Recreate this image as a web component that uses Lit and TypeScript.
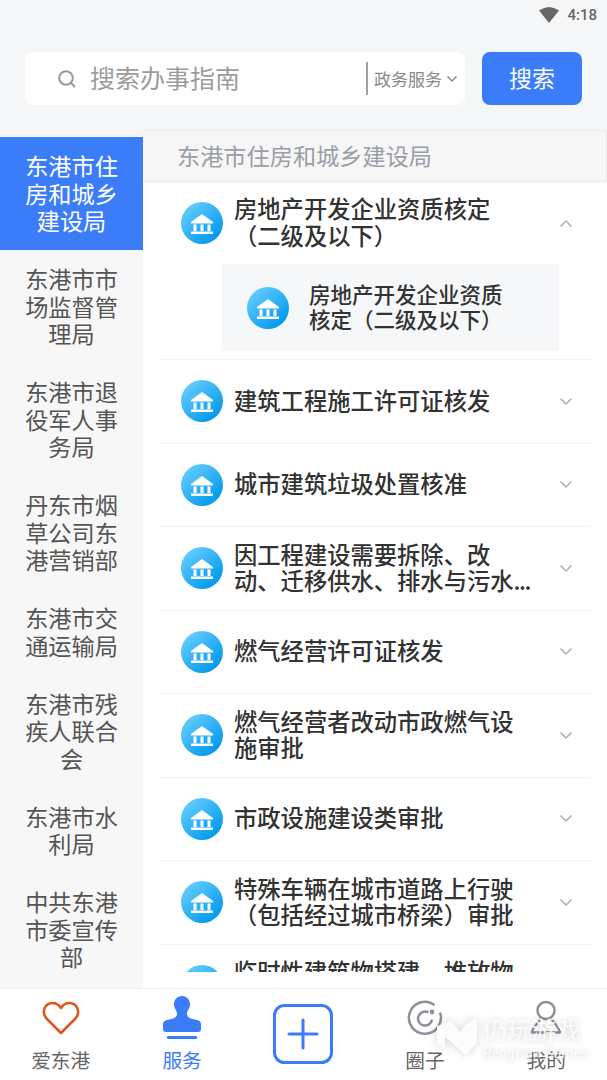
import { LitElement, html, css, svg } from 'lit';
import { customElement } from 'lit/decorators.js';

const departments = [
  '东港市住房和城乡建设局',
  '东港市市场监督管理局',
  '东港市退役军人事务局',
  '丹东市烟草公司东港营销部',
  '东港市交通运输局',
  '东港市残疾人联合会',
  '东港市水利局',
  '中共东港市委宣传部',
];

// line breaks are fixed, the app breaks these titles differently than css would
const services = [
  '建筑工程施工许可证核发',
  '城市建筑垃圾处置核准',
  '因工程建设需要拆除、改\n动、迁移供水、排水与污水...',
  '燃气经营许可证核发',
  '燃气经营者改动市政燃气设\n施审批',
  '市政设施建设类审批',
  '特殊车辆在城市道路上行驶\n（包括经过城市桥梁）审批',
  '临时性建筑物搭建、堆放物\n料审批',
];

const bankIcon = (id: string) => html`
  <svg class="bank" width="42" height="42" viewBox="0 0 42 42">
    <defs>
      <linearGradient id=${id} x1="0.15" y1="0.1" x2="0.85" y2="0.9">
        <stop offset="0" stop-color="#62ccff" />
        <stop offset="1" stop-color="#0098ec" />
      </linearGradient>
    </defs>
    <circle cx="21" cy="21" r="21" fill="url(#${id})" />
    <path d="M21 12 L32 20 V21.500 H10 V20 Z" fill="#fff" />
    <path d="M12.500 22.500h3v6.500h-3z M19.500 22.500h3v6.500h-3z M26.500 22.500h3v6.500h-3z" fill="#fff" />
    <rect x="10" y="29.500" width="22" height="2.500" fill="#fff" />
  </svg>
`;

const chevron = (up = false) => svg`
  <svg class="chev" width="14" height="9" viewBox="0 0 14 9">
    <path d=${up ? 'M1.500 7.500 L7 2 L12.500 7.500' : 'M1.500 1.500 L7 7 L12.500 1.500'} fill="none" stroke="#a9adb8" stroke-width="1.500" />
  </svg>
`;

// the trailing dots sit tighter than the font's own
const titleText = (s: string) =>
  s.endsWith('...') ? html`${s.slice(0, -3)}<span class="dots">...</span>` : s;

@customElement('app-root')
export class AppRoot extends LitElement {
  static styles = css`
    :host {
      display: flex;
      flex-direction: column;
      position: relative;
      width: 607px;
      height: 1080px;
      overflow: hidden;
      background: #f5f6f8;
      font-family: 'Noto Sans CJK SC', 'Noto Sans', sans-serif;
    }
    .status {
      height: 30px;
      display: flex;
      justify-content: flex-end;
      align-items: center;
      gap: 8px;
      padding-right: 10px;
      font: 500 15px Roboto, sans-serif;
      color: #666;
    }
    .search-row {
      display: flex;
      gap: 17px;
      padding: 22px 25px 25px;
    }
    .search {
      width: 440px;
      height: 53px;
      border-radius: 8px;
      background: #fff;
      display: flex;
      align-items: center;
      padding-left: 32px;
      box-sizing: border-box;
    }
    .placeholder {
      margin-left: 13px;
      width: 276px;
      padding-bottom: 4px;
      font-size: 25px;
      color: #9c9c9c;
    }
    .scope {
      height: 33px;
      border-left: 2px solid #a0a0a0;
      padding-left: 6px;
      display: flex;
      align-items: center;
      gap: 4px;
      font-size: 17px;
      color: #8a8a8a;
    }
    .go {
      width: 100px;
      height: 53px;
      box-sizing: border-box;
      padding-bottom: 4px;
      border-radius: 8px;
      background: #3b7cf8;
      color: #fff;
      font-size: 23px;
      display: flex;
      align-items: center;
      justify-content: center;
    }
    .body {
      flex: 1;
      min-height: 0;
      display: flex;
      align-items: stretch;
    }
    .side {
      width: 143px;
      margin-top: 7px;
      background: #f7f7f7;
      overflow: hidden;
    }
    .dept {
      padding: 15px 24px 15.500px;
      font-size: 23.200px;
      line-height: 27.500px;
      text-align: center;
      color: #555;
    }
    .dept.on {
      background: #3b7cf8;
      color: #fff;
    }
    .main {
      flex: 1;
      min-width: 0;
      background: #fff;
      display: flex;
      flex-direction: column;
    }
    .head {
      height: 52px;
      flex: none;
      box-sizing: border-box;
      border-top: 1px solid #ececec;
      border-right: 1px solid #ececec;
      border-bottom: 1px solid #ececec;
      background: #f6f6f7;
      padding: 0 0 3px 34px;
      display: flex;
      align-items: center;
      font-size: 23.200px;
      color: #9a9ea6;
    }
    .list {
      height: 790px;
      overflow: hidden;
      padding: 0 16px 0 17px;
    }
    .item {
      border-bottom: 1px solid #f1f1f1;
    }
    .row {
      height: 82.500px;
      display: flex;
      align-items: center;
      padding-left: 21px;
    }
    .row.open {
      height: 82px;
    }
    .title {
      flex: 1;
      min-width: 0;
      margin-left: 11px;
      padding-bottom: 2px;
      font-size: 23.300px;
      font-weight: 500;
      line-height: 26.700px;
      color: #333;
      white-space: pre;
    }
    .dots {
      letter-spacing: -1.500px;
    }
    .chev {
      flex: none;
      margin: 0 18px 0 24px;
    }
    .sub {
      margin: 0 32px 8px 62px;
      height: 87px;
      background: #f6f7f8;
      display: flex;
      align-items: center;
      padding-left: 25px;
    }
    .sub-title {
      margin-left: 20px;
      width: 200px;
      padding-bottom: 3px;
      font-size: 21.500px;
      font-weight: 500;
      line-height: 25px;
      color: #333;
    }
    .nav {
      height: 92px;
      flex: none;
      background: #fff;
      border-top: 1px solid #f0f0f0;
      box-sizing: border-box;
      display: grid;
      grid-template-columns: repeat(5, 1fr);
    }
    .tab {
      display: flex;
      flex-direction: column;
      align-items: center;
      font-size: 19.700px;
      color: #666;
    }
    .tab.on {
      color: #3b7cf8;
    }
    .icon {
      height: 57px;
      display: flex;
      align-items: center;
      justify-content: center;
    }
    .tab span {
      line-height: 28px;
    }
    .plus {
      padding-top: 15px;
    }
    .mark {
      position: absolute;
      left: 437px;
      top: 1014px;
      display: flex;
      gap: 6px;
      align-items: flex-start;
      color: rgba(255, 255, 255, 0.9);
      pointer-events: none;
    }
    .mark svg {
      margin-top: 3px;
      filter: drop-shadow(0 0 4px rgba(0, 0, 0, 0.2));
    }
    .mark b {
      display: block;
      font-size: 24.300px;
      font-weight: 400;
      line-height: 30px;
      text-shadow: 0 0 6px rgba(0, 0, 0, 0.2);
    }
    .mark i {
      display: block;
      margin-top: 1px;
      font: 400 14px/16px Roboto, sans-serif;
      text-shadow: 0 0 5px rgba(0, 0, 0, 0.2);
    }
  `;

  render() {
    return html`
      <div class="status">
        <svg width="20" height="16" viewBox="0 0 20 16"><path d="M0 3.500 Q10 -3.500 20 3.500 L10 16 Z" fill="#666" /></svg>
        4:18
      </div>
      <div class="search-row">
        <div class="search">
          <svg width="20" height="20" viewBox="0 0 20 20">
            <circle cx="9" cy="9" r="6.800" fill="none" stroke="#999" stroke-width="2" />
            <path d="M14 14 L18 18" stroke="#999" stroke-width="2" />
          </svg>
          <div class="placeholder">搜索办事指南</div>
          <div class="scope">
            政务服务
            <svg width="12" height="8" viewBox="0 0 12 8"><path d="M1.500 1.500 L6 6 L10.500 1.500" fill="none" stroke="#8a8a8a" stroke-width="1.500" /></svg>
          </div>
        </div>
        <div class="go">搜索</div>
      </div>
      <div class="body">
        <div class="side">
          ${departments.map((d, i) => html`<div class="dept ${i === 0 ? 'on' : ''}">${d}</div>`)}
        </div>
        <div class="main">
          <div class="head">东港市住房和城乡建设局</div>
          <div class="list">
            <div class="item">
              <div class="row open">
                ${bankIcon('g0')}
                <div class="title">${'房地产开发企业资质核定\n（二级及以下）'}</div>
                ${chevron(true)}
              </div>
              <div class="sub">
                ${bankIcon('s0')}
                <div class="sub-title">房地产开发企业资质核定（二级及以下）</div>
              </div>
            </div>
            ${services.map(
              (s, i) => html`
                <div class="item">
                  <div class="row">
                    ${bankIcon(`g${i + 1}`)}
                    <div class="title">${titleText(s)}</div>
                    ${chevron()}
                  </div>
                </div>
              `
            )}
          </div>
        </div>
      </div>
      <div class="nav">
        <div class="tab">
          <div class="icon">
            <svg width="38" height="34" viewBox="0 0 38 34">
              <path d="M19 32 L4.500 17.500 C-1 11 3 2 10.500 2 C14 2 17 4 19 7 C21 4 24 2 27.500 2 C35 2 39 11 33.500 17.500 Z" fill="none" stroke="#e0531c" stroke-width="2.500" stroke-linejoin="round" />
            </svg>
          </div>
          <span>爱东港</span>
        </div>
        <div class="tab on">
          <div class="icon">
            <svg width="38" height="44" viewBox="0 0 38 44">
              <path d="M19 0 C14 0 11 4 11 8.500 C11 12 13.500 14 14 17 C14.500 21 11 23 4 24 C1.500 24.500 0 26 0 28 V33 C0 35 1 36 3 36 H35 C37 36 38 35 38 33 V28 C38 26 36.500 24.500 34 24 C27 23 23.500 21 24 17 C24.500 14 27 12 27 8.500 C27 4 24 0 19 0 Z" fill="#3b7cf8" />
              <rect x="4" y="40" width="30" height="3" rx="1" fill="#3b7cf8" />
            </svg>
          </div>
          <span>服务</span>
        </div>
        <div class="tab plus">
          <svg width="60" height="60" viewBox="0 0 60 60">
            <rect x="1.500" y="1.500" width="57" height="57" rx="10" fill="none" stroke="#3b7cf8" stroke-width="3" />
            <path d="M30 16 V44 M16 30 H44" stroke="#3b7cf8" stroke-width="3" stroke-linecap="round" />
          </svg>
        </div>
        <div class="tab">
          <div class="icon">
            <svg width="36" height="36" viewBox="0 0 36 36">
              <path d="M27.500 5 A16 16 0 1 0 33 12.500" fill="none" stroke="#8e9099" stroke-width="2.500" />
              <path d="M21.500 12.500 A7 7 0 1 0 25 19.500" fill="none" stroke="#8e9099" stroke-width="2.500" />
              <circle cx="25" cy="12" r="2.400" fill="#8e9099" />
            </svg>
          </div>
          <span>圈子</span>
        </div>
        <div class="tab">
          <div class="icon">
            <svg width="34" height="36" viewBox="0 0 34 36">
              <circle cx="17" cy="10.500" r="8.500" fill="none" stroke="#8e9099" stroke-width="2.500" />
              <path d="M11 20 C8 24 4 27 3 32.500 H31 C30 27 26 24 23 20" fill="none" stroke="#8e9099" stroke-width="2.500" stroke-linejoin="round" />
            </svg>
          </div>
          <span>我的</span>
        </div>
      </div>
      <div class="mark">
        <svg width="40" height="38" viewBox="0 0 40 38">
          <path d="M0 9 L14 4 L23 15 L30 6 L40 1 V26 L29 38 L8 20 V32 L0 27 Z" fill="currentColor" />
        </svg>
        <div><b>仍玩游戏</b><i>Rengwan Games</i></div>
      </div>
    `;
  }
}
